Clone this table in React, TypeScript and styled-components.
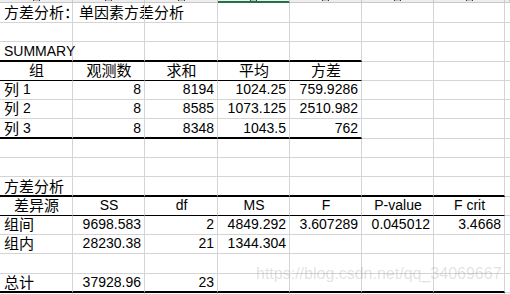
import styled, { createGlobalStyle } from "styled-components"

const GlobalStyle = createGlobalStyle`
  html, body {
    margin: 0;
    padding: 0;
    background: #ffffff;
  }
  body {
    font-family: "Liberation Sans", "Noto Sans CJK SC", sans-serif;
    font-size: 14px;
    color: #000;
  }
`

const colWidths = [73, 72, 73, 72, 72, 72, 71, 5]
const rowHeights = [20, 19, 20, 19, 19, 19, 20, 19, 19, 20, 19, 19, 19, 20, 19, 2]

const Page = styled.div`
  position: relative;
  width: 510px;
  height: 294px;
  overflow: hidden;
`

const Sheet = styled.div`
  display: grid;
  grid-template-columns: ${colWidths.map((w) => w + "px").join(" ")};
  grid-template-rows: 3px ${rowHeights.map((h) => h + "px").join(" ")};
`

// column header strip, scrolled so only the feet of the letters peek out
const ColHead = styled.div<{ $active?: boolean; $mark?: boolean }>`
  box-sizing: border-box;
  height: 3px;
  display: flex;
  justify-content: center;
  background: #eeeeee;
  border-right: 1px solid #c8c8c8;
  border-bottom: 1px solid ${(p) => (p.$active ? "#217346" : "#c8c8c8")};
  ${(p) => p.$active && "box-shadow: inset 0 -1px 0 #217346;"}

  &::after {
    content: "";
    display: ${(p) => (p.$mark ? "block" : "none")};
    width: 5px;
    height: 1px;
    border-left: 1px solid #3a3a3a;
    border-right: 1px solid #3a3a3a;
    background: rgba(60, 60, 60, 0.25);
  }
`

type Align = "left" | "right" | "center"
type Edge = "none" | "thin" | "thick"

const Cell = styled.div<{ $align: Align; $bottom: Edge }>`
  box-sizing: border-box;
  display: flex;
  align-items: flex-end;
  justify-content: ${(p) =>
    p.$align === "right" ? "flex-end" : p.$align === "center" ? "center" : "flex-start"};
  padding: 0 3px ${(p) => (p.$bottom === "thick" ? 0 : 1)}px 4px;
  white-space: nowrap;
  overflow: visible;
  border-right: 1px solid #d4d4d4;
  border-bottom: ${(p) =>
    p.$bottom === "thick" ? "2px solid #000" : p.$bottom === "thin" ? "1px solid #000" : "1px solid #d4d4d4"};
`

const Content = styled.span`
  display: block;
  height: 17px;
  line-height: 17px;
  white-space: pre;
`

// Chinese runs are set a touch larger, as the sheet's CJK font is
const Han = styled.span`
  font-family: "Noto Sans CJK SC", sans-serif;
  font-size: 15px;
  line-height: 0;
  vertical-align: -1px;
`

const Watermark = styled.div`
  position: absolute;
  left: 256px;
  top: 265px;
  font-size: 16px;
  color: rgba(120, 120, 120, 0.22);
  white-space: nowrap;
  pointer-events: none;
`

type C = { t?: string; a?: Align }

const L = (t: string): C => ({ t, a: "left" })
const R = (t: string): C => ({ t, a: "right" })
const M = (t: string): C => ({ t, a: "center" })

// each row: cells, plus how far (in columns) a bottom border runs and which kind
const rows: { cells: C[]; edge?: Edge; span?: number }[] = [
  { cells: [L("方差分析：单因素方差分析")] },
  { cells: [] },
  { cells: [L("SUMMARY")], edge: "thick", span: 5 },
  { cells: [M("组"), M("观测数"), M("求和"), M("平均"), M("方差")], edge: "thin", span: 5 },
  { cells: [L("列 1"), R("8"), R("8194"), R("1024.25"), R("759.9286")] },
  { cells: [L("列 2"), R("8"), R("8585"), R("1073.125"), R("2510.982")] },
  { cells: [L("列 3"), R("8"), R("8348"), R("1043.5"), R("762")], edge: "thick", span: 5 },
  { cells: [] },
  { cells: [] },
  { cells: [L("方差分析")], edge: "thick", span: 7 },
  {
    cells: [M("差异源"), M("SS"), M("df"), M("MS"), M("F"), M("P-value"), M("F crit")],
    edge: "thin",
    span: 7,
  },
  {
    cells: [L("组间"), R("9698.583"), R("2"), R("4849.292"), R("3.607289"), R("0.045012"), R("3.4668")],
  },
  { cells: [L("组内"), R("28230.38"), R("21"), R("1344.304")] },
  { cells: [] },
  { cells: [L("总计"), R("37928.96"), R("23")], edge: "thick", span: 7 },
  { cells: [] },
]

const hanRe = /[\u3000-\u9fff\uff00-\uffef]/

function Text({ t }: { t?: string }) {
  if (!t) return null
  const parts = t.split(/([\u3000-\u9fff\uff00-\uffef]+)/).filter(Boolean)
  return (
    <Content>
      {parts.map((p, i) => (hanRe.test(p) ? <Han key={i}>{p}</Han> : p))}
    </Content>
  )
}

export default function App() {
  return (
    <Page>
      <GlobalStyle />
      <Sheet>
        {colWidths.map((_, i) => (
          <ColHead key={i} $active={i === 3} $mark={i < 7} />
        ))}
        {rows.map((row, r) =>
          colWidths.map((_, c) => {
            const cell = row.cells[c] || {}
            const bottom: Edge = row.edge && c < (row.span || 0) ? row.edge : "none"
            return (
              <Cell key={r + "-" + c} $align={cell.a || "left"} $bottom={bottom}>
                <Text t={cell.t} />
              </Cell>
            )
          })
        )}
      </Sheet>
      <Watermark>https://blog.csdn.net/qq_34069667</Watermark>
    </Page>
  )
}
